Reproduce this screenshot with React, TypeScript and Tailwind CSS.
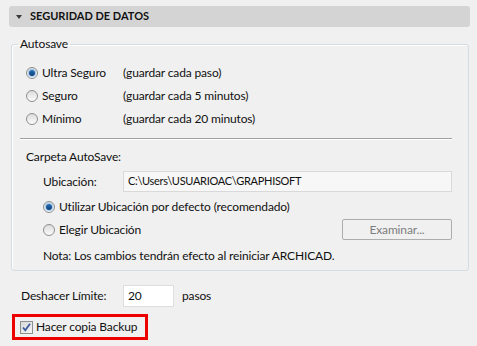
import React from "react";

const font = { fontFamily: "Lato, 'Noto Sans', sans-serif" };

function Radio({ checked }: { checked?: boolean }) {
  return (
    <span className="relative inline-flex h-[12px] w-[12px] shrink-0 items-center justify-center rounded-full border border-[#8e8f8f] bg-gradient-to-b from-[#dcdcdc] to-[#fbfbfb]">
      {checked && (
        <span className="h-[6px] w-[6px] rounded-full bg-gradient-to-b from-[#2a6fb5] to-[#0b3f7a] shadow-[0_0_1px_1px_#9fc6ec]" />
      )}
    </span>
  );
}

function Checkbox() {
  return (
    <span className="inline-flex h-[13px] w-[13px] shrink-0 items-center justify-center border border-[#8e8f8f] bg-gradient-to-br from-[#d8d8d8] to-[#f6f6f6]">
      <svg width="11" height="11" viewBox="0 0 11 11">
        <path d="M2 5.5 L4.3 8.3 L9 1.8" fill="none" stroke="#3d5a9e" strokeWidth="1.8" />
      </svg>
    </span>
  );
}

export default function App() {
  return (
    <div
      className="flex h-[346px] w-[477px] flex-col bg-[#f0f0f0] pt-[6px] text-[12px] tracking-[-0.15px] text-[#111]"
      style={font}
    >
      <div className="ml-[9px] flex h-[21px] w-[461px] items-center rounded-[3px] bg-[#d4d4d4]">
        <svg className="ml-[7px]" width="6" height="4" viewBox="0 0 6 4">
          <path d="M0 0 H6 L3 4 Z" fill="#3a3a3a" />
        </svg>
        <span className="ml-[8px] text-[11px] font-bold tracking-[0px] text-[#111]">
          SEGURIDAD DE DATOS
        </span>
      </div>

      <fieldset className="ml-[11px] mt-[9px] w-[458px] rounded-[3px] border border-[#d3dce3] px-0 pb-[4px] shadow-[inset_1px_1px_0_#fff]">
        <legend className="ml-[6px] px-[2px] leading-[16px]">Autosave</legend>
        <div className="flex flex-col pl-[14px] pr-[16px] pt-[9px]">
          {[
            ["Ultra Seguro", "(guardar cada paso)", true],
            ["Seguro", "(guardar cada 5 minutos)", false],
            ["Mínimo", "(guardar cada 20 minutos)", false],
          ].map(([a, b, c]) => (
            <div key={a as string} className="flex h-[23px] items-center">
              <Radio checked={c as boolean} />
              <span className="ml-[4px] w-[81px]">{a}</span>
              <span>{b}</span>
            </div>
          ))}
          <div className="ml-[-6px] mt-[8px] h-[1px] bg-[#a0a0a0] shadow-[0_1px_0_#fff]" />
          <div className="mt-[8px] flex h-[20px] items-center">Carpeta AutoSave:</div>
          <div className="mt-[4px] flex h-[21px] items-center pl-[17px]">
            <span className="w-[80px]">Ubicación:</span>
            <div className="flex h-[21px] flex-1 items-center border border-[#d9d9d9] bg-[#f7f7f7] pl-[4px] text-[11px] tracking-[-0.3px]">
              C:\Users\USUARIOAC\GRAPHISOFT
            </div>
          </div>
          <div className="mt-[5px] flex h-[20px] items-center pl-[17px]">
            <Radio checked />
            <span className="ml-[4px]">Utilizar Ubicación por defecto (recomendado)</span>
          </div>
          <div className="mt-[2px] flex h-[21px] items-center pl-[17px]">
            <Radio />
            <span className="ml-[4px] flex-1">Elegir Ubicación</span>
            <div className="flex h-[21px] w-[110px] items-center justify-center rounded-[2px] border border-[#adadad] bg-[#f0f0f0] text-[#7d7d7d]">
              Examinar...
            </div>
          </div>
          <div className="mt-[6px] flex h-[20px] items-center pl-[17px]">
            Nota: Los cambios tendrán efecto al reiniciar ARCHICAD.
          </div>
        </div>
      </fieldset>

      <div className="ml-[21px] mt-[14px] flex h-[22px] items-center">
        <span className="w-[102px]">Deshacer Límite:</span>
        <div className="flex h-[22px] w-[51px] items-center border border-[#dedede] bg-white pl-[4px]">20</div>
        <span className="ml-[8px]">pasos</span>
      </div>

      <div className="ml-[12px] mt-[7px] flex h-[26px] w-[136px] items-center border-[3px] border-[#ee0000] pl-[5px]">
        <Checkbox />
        <span className="ml-[3px]">Hacer copia Backup</span>
      </div>
    </div>
  );
}
